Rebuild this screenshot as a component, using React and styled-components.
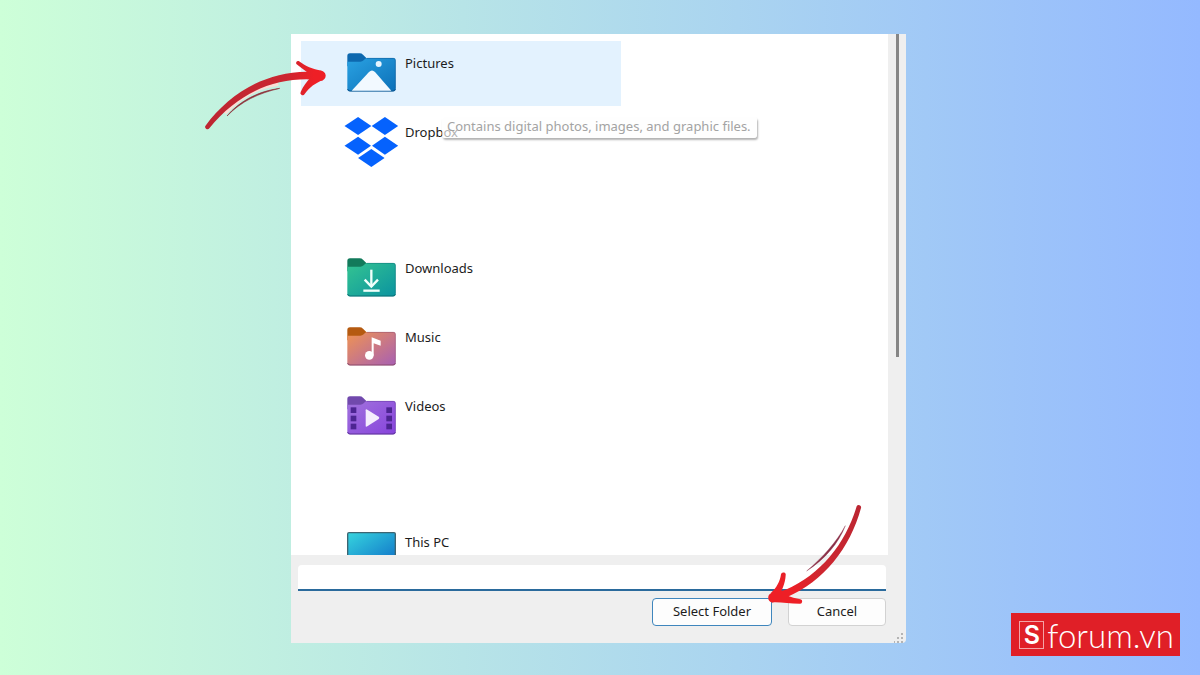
import React, { useState } from "react";
import styled, { createGlobalStyle } from "styled-components";

const GlobalStyle = createGlobalStyle`
  * {
    box-sizing: border-box;
  }

  body {
    margin: 0;
    font-family: "Noto Sans", "Open Sans", sans-serif;
    color: #1c1c1c;
  }
`;

const Page = styled.main`
  position: relative;
  display: flex;
  height: 100vh;
  padding: 34px 294px 32px 291px;
  background: linear-gradient(90deg, #cdffd8, #94b9ff);
`;

const Dialog = styled.section`
  position: relative;
  flex: 1;
  min-width: 0;
  display: flex;
  flex-direction: column;
  background: #efefef;
  border-radius: 0 0 4px 0;
`;

const Body = styled.div`
  flex: 1;
  min-height: 0;
  display: flex;
`;

const List = styled.div`
  flex: 1;
  min-width: 0;
  overflow: hidden;
  padding: 7px 10px 0;
  display: flex;
  flex-direction: column;
  gap: 71px;
  background: #fff;
`;

const Group = styled.ul`
  list-style: none;
  margin: 0;
  padding: 0;
  display: flex;
  flex-direction: column;
  gap: 4px;
`;

const Row = styled.button`
  display: flex;
  align-items: center;
  gap: 6px;
  width: 320px;
  max-width: 100%;
  height: 65px;
  padding: 0 0 2px 43px;
  border: none;
  background: ${(props) => (props.$active ? "#e3f2fe" : "transparent")};
  color: inherit;
  font: inherit;
  text-align: left;
  cursor: pointer;
`;

const IconCell = styled.span`
  display: flex;
  justify-content: center;
  width: 55px;
`;

const Name = styled.span`
  align-self: flex-start;
  margin-top: 13px;
  font-size: 13px;
  line-height: 18px;
`;

const ScrollTrack = styled.div`
  width: 18px;
  padding-left: 8px;
`;

const ScrollThumb = styled.div`
  width: 3px;
  height: 62%;
  background: #868686;
`;

const Tooltip = styled.div`
  position: absolute;
  top: 83px;
  left: 151px;
  padding: 0 6px 2px 5px;
  border-radius: 3px;
  background: rgba(253, 253, 253, 0.65);
  box-shadow: 1px 2px 2px rgba(0, 0, 0, 0.3);
  color: #a3a3a3;
  font-size: 13px;
  line-height: 19px;
  white-space: nowrap;
`;

const Footer = styled.form`
  display: flex;
  flex-direction: column;
  gap: 7px;
  padding: 10px 20px 17px 7px;
`;

const FolderInput = styled.input`
  width: 100%;
  height: 26px;
  padding: 0 8px;
  border: none;
  border-bottom: 2px solid #2a6a9c;
  border-radius: 4px 4px 0 0;
  background: #fff;
  font: inherit;
  font-size: 13px;
  outline: none;
`;

const Actions = styled.div`
  display: flex;
  justify-content: flex-end;
  gap: 16px;
`;

const Button = styled.button`
  width: ${(props) => (props.$primary ? "120px" : "98px")};
  height: 28px;
  padding: 0 0 2px;
  border: 1px solid ${(props) => (props.$primary ? "#3f86bd" : "#d2d2d2")};
  border-radius: 4px;
  background: #fdfdfd;
  color: inherit;
  font: inherit;
  font-size: 13px;
  cursor: pointer;
`;

const Grip = styled.svg`
  position: absolute;
  right: 2px;
  bottom: 0;
`;

const ArrowToPictures = styled.svg`
  position: absolute;
  left: -96px;
  top: 16px;
  pointer-events: none;
`;

const ArrowToSelect = styled.svg`
  position: absolute;
  right: 36px;
  bottom: 28px;
  pointer-events: none;
`;

const Logo = styled.a`
  position: absolute;
  right: 20px;
  bottom: 19px;
  display: flex;
  align-items: center;
  gap: 3px;
  height: 43px;
  padding: 0 6px 0 8px;
  background: #e01f27;
  color: #fff;
  text-decoration: none;
`;

const LogoMark = styled.span`
  display: flex;
  align-items: center;
  justify-content: center;
  width: 25px;
  height: 28px;
  border: 1px solid #f3a3a6;
  font-family: Inter, sans-serif;
  font-size: 25px;
  font-weight: 600;
  line-height: 26px;
`;

const LogoText = styled.span`
  font-family: Lato, sans-serif;
  font-size: 33px;
  font-weight: 300;
  line-height: 36px;
`;

const Folder = ({ id, tab, from, to, edge, children }) => (
  <svg width="49" height="39" viewBox="0 0 147 117" aria-hidden="true">
    <defs>
      <linearGradient id={id} x1="0" y1="0" x2="1" y2="1">
        <stop offset="0" stopColor={from} />
        <stop offset="1" stopColor={to} />
      </linearGradient>
    </defs>
    <path d="M1 40V9Q1 1 9 1H38Q44 1 48 5L58 15H90V40Z" fill={tab} />
    <path
      d="M1 26H40Q46 26 50 22L54 18Q57 15 62 15H139Q146 15 146 22V107Q146 115 138 115H9Q1 115 1 107Z"
      fill={`url(#${id})`}
    />
    <path d="M2 108Q3 114 9 114H138Q144 114 145 108" fill="none" stroke={edge} strokeWidth="3" />
    <path d="M60 16H139Q145 16 145 22V107" fill="none" stroke={edge} strokeWidth="2" opacity="0.7" />
    {children}
  </svg>
);

const PicturesIcon = () => (
  <Folder id="pictures" tab="#0d68ae" from="#2aa2e2" to="#0c70b8" edge="#0b528c">
    <circle cx="95" cy="33" r="9" fill="#e6f5ff" />
    <path d="M14 113L66 57Q75 48 84 57L133 113Z" fill="#f2f9ff" />
  </Folder>
);

const DropboxIcon = () => (
  <svg width="55" height="50" viewBox="0 0 165 151" fill="#0562fd" aria-hidden="true">
    <path d="M42 0L82 27L42 54L1 27Z" />
    <path d="M123 0L163 27L123 54L83 27Z" />
    <path d="M42 60L81 87L42 114L1 87Z" />
    <path d="M123 60L163 87L123 114L84 87Z" />
    <path d="M82 97L122 124L82 151L42 124Z" />
  </svg>
);

const DownloadsIcon = () => (
  <Folder id="downloads" tab="#127a5b" from="#34c491" to="#0b93a0" edge="#0b6f74">
    <g fill="none" stroke="#f1fffb" strokeWidth="7">
      <path d="M73 35V86" />
      <path d="M53 65L73 86L93 65" />
      <path d="M49 98H98" />
    </g>
  </Folder>
);

const MusicIcon = () => (
  <Folder id="music" tab="#b55a10" from="#f09452" to="#a75fb4" edge="#8a4a6a">
    <circle cx="67" cy="85" r="13" fill="#fff" />
    <path d="M74 85V31L101 41V56L80 49V85Z" fill="#fff" />
  </Folder>
);

const VideosIcon = () => (
  <Folder id="videos" tab="#7149ad" from="#a173dd" to="#8743dc" edge="#5c3397">
    <path d="M56 43Q56 38 61 41L95 62Q99 65 95 69L61 91Q56 94 56 89Z" fill="#f5edfd" />
    <g fill="#4d2592">
      <rect x="11" y="34" width="17" height="17" />
      <rect x="11" y="59" width="17" height="17" />
      <rect x="11" y="83" width="17" height="17" />
      <rect x="118" y="34" width="17" height="17" />
      <rect x="118" y="59" width="17" height="17" />
      <rect x="118" y="83" width="17" height="17" />
    </g>
  </Folder>
);

const ThisPCIcon = () => (
  <svg width="49" height="40" viewBox="0 0 147 120" aria-hidden="true">
    <defs>
      <linearGradient id="screen" x1="0" y1="0" x2="1" y2="1">
        <stop offset="0" stopColor="#36d5de" />
        <stop offset="1" stopColor="#0f70c8" />
      </linearGradient>
    </defs>
    <rect x="2" y="2" width="143" height="94" rx="4" fill="url(#screen)" stroke="#3d6572" strokeWidth="4" />
    <path d="M55 98H92V112H108V118H39V112H55Z" fill="#8a9aa3" />
  </svg>
);

const groups = [
  [
    { name: "Pictures", icon: <PicturesIcon /> },
    { name: "Dropbox", icon: <DropboxIcon /> },
  ],
  [
    { name: "Downloads", icon: <DownloadsIcon /> },
    { name: "Music", icon: <MusicIcon /> },
    { name: "Videos", icon: <VideosIcon /> },
  ],
  [{ name: "This PC", icon: <ThisPCIcon /> }],
];

const App = () => {
  const [selected, setSelected] = useState("Pictures");
  const [folder, setFolder] = useState("");

  return (
    <Page>
      <GlobalStyle />
      <Dialog>
        <Body>
          <List>
            {groups.map((items) => (
              <Group key={items[0].name}>
                {items.map((item) => (
                  <li key={item.name}>
                    <Row type="button" $active={selected === item.name} onClick={() => setSelected(item.name)}>
                      <IconCell>{item.icon}</IconCell>
                      <Name>{item.name}</Name>
                    </Row>
                  </li>
                ))}
              </Group>
            ))}
          </List>
          <ScrollTrack>
            <ScrollThumb />
          </ScrollTrack>
        </Body>
        <Footer onSubmit={(e) => e.preventDefault()}>
          <FolderInput aria-label="Folder" value={folder} onChange={(e) => setFolder(e.target.value)} />
          <Actions>
            <Button type="submit" $primary>Select Folder</Button>
            <Button type="button">Cancel</Button>
          </Actions>
        </Footer>
        <Tooltip role="tooltip">Contains digital photos, images, and graphic files.</Tooltip>
        <Grip width="10" height="10" viewBox="0 0 10 10" fill="#b4b4b4" aria-hidden="true">
          <path d="M7 0h2v2h-2zM7 4h2v2h-2zM3 4h2v2h-2zM7 8h2v2h-2zM3 8h2v2h-2zM0 8h1v2h-1z" />
        </Grip>
        <ArrowToPictures width="140" height="84" viewBox="0 60 420 252" aria-hidden="true">
          <defs>
            <linearGradient id="arrowLeft" x1="0" y1="0" x2="420" y2="0" gradientUnits="userSpaceOnUse">
              <stop offset="0" stopColor="#bb2632" />
              <stop offset="0.65" stopColor="#cb2630" />
              <stop offset="0.85" stopColor="#ee1f26" />
            </linearGradient>
          </defs>
          <path d="M90 250C130 205 185 172 250 163" fill="none" stroke="#fbdcd5" strokeWidth="9" />
          <path d="M96 258C130 217 185 184 254 175C190 190 140 213 96 258Z" fill="#8d2f38" stroke="#8d2f38" strokeWidth="2" />
          <g fill="url(#arrowLeft)">
            <path d="M31 288C100 195 205 126 335 125L376 122A15 15 0 0 1 378 152L335 148C225 148 125 195 43 295A7 7 0 0 1 31 288Z" />
            <path d="M311 93C332 108 352 118 380 122L370 148C348 135 325 119 305 103A6 6 0 0 1 311 93Z" />
            <path d="M317 186C325 168 335 156 345 145L385 150C362 158 342 173 329 192A6 6 0 0 1 317 186Z" />
          </g>
        </ArrowToPictures>
        <ArrowToSelect width="110" height="120" viewBox="0 0 330 360" aria-hidden="true">
          <defs>
            <linearGradient id="arrowRight" x1="300" y1="30" x2="30" y2="310" gradientUnits="userSpaceOnUse">
              <stop offset="0" stopColor="#bb2632" />
              <stop offset="0.6" stopColor="#cf262f" />
              <stop offset="0.85" stopColor="#ee1f26" />
            </linearGradient>
          </defs>
          <path d="M256 92C236 145 195 192 140 228C190 185 230 140 256 92Z" fill="#8b3048" stroke="#8b3048" strokeWidth="1" />
          <g fill="url(#arrowRight)">
            <path d="M290 34C258 142 185 238 75 285L35 294A15 15 0 0 0 37 323L80 307C192 258 270 160 303 39A7 7 0 0 0 290 34Z" />
            <path d="M63 238C60 260 50 278 32 295L52 312C65 290 76 265 77 241A7 7 0 0 0 63 238Z" />
            <path d="M78 300C93 307 108 310 121 313A6 6 0 0 1 119 326C90 326 62 321 40 322L50 300Z" />
          </g>
        </ArrowToSelect>
      </Dialog>
      <Logo href="#">
        <LogoMark>S</LogoMark>
        <LogoText>forum.vn</LogoText>
      </Logo>
    </Page>
  );
};

export default App;
